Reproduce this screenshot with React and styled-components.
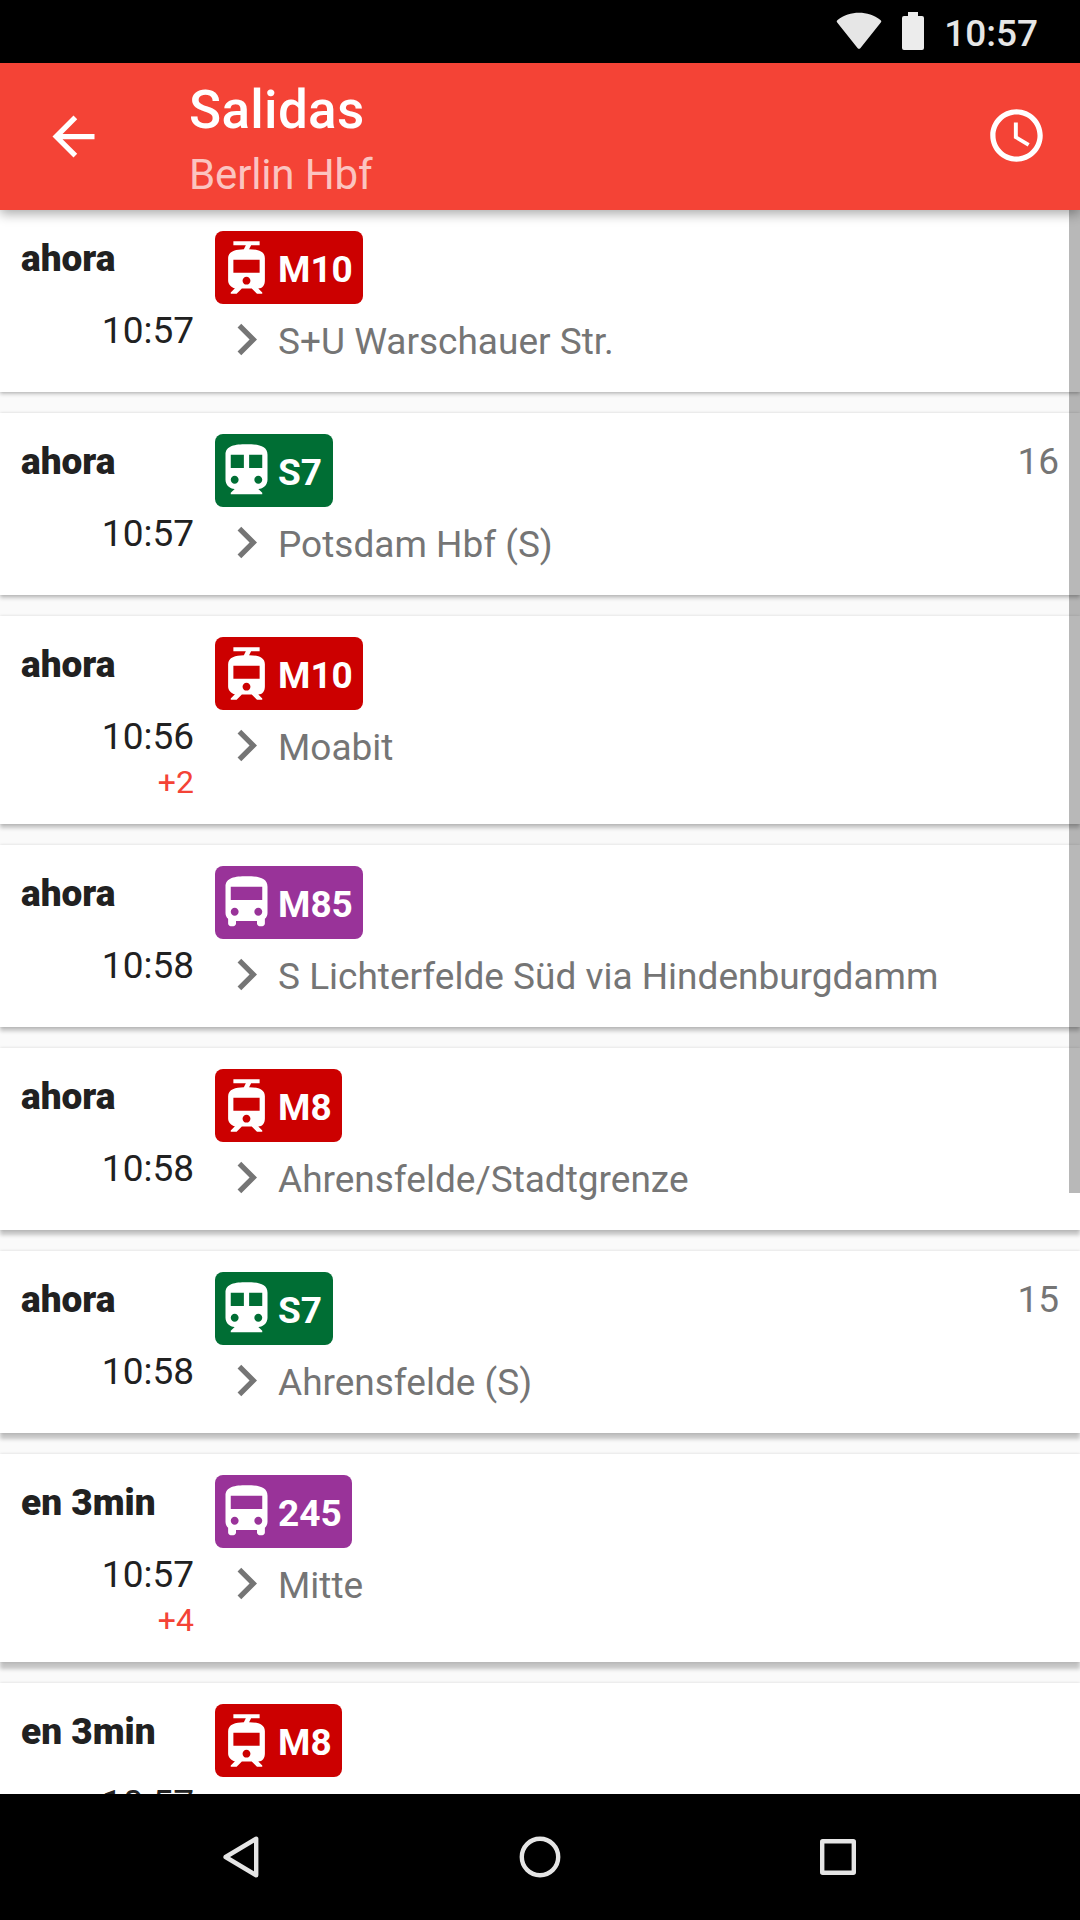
import React from "react";
import styled, { createGlobalStyle } from "styled-components";

const GlobalStyle = createGlobalStyle`
  * { box-sizing: border-box; }
  body { margin: 0; background: #fafafa; }
`;

const Screen = styled.div`
  display: flex;
  flex-direction: column;
  width: 1080px;
  height: 1920px;
  overflow: hidden;
  background: #fafafa;
  font-family: Roboto, "Liberation Sans", sans-serif;
  color: #212121;
`;

const StatusBar = styled.div`
  display: flex;
  flex: none;
  align-items: flex-start;
  justify-content: flex-end;
  height: 63px;
  padding: 12px 42px 0 0;
  background: #000;
  color: #e6e6e6;
`;

const WifiIcon = styled.svg`
  width: 46px;
  height: 38px;
  margin-right: 20px;
  fill: currentColor;
`;

const BatteryIcon = styled.svg`
  width: 22px;
  height: 38px;
  margin-right: 20px;
  fill: #ececec;
`;

const Clock = styled.span`
  font-size: 37px;
  font-weight: 500;
  line-height: 43px;
`;

const Toolbar = styled.header`
  position: relative;
  z-index: 2;
  display: flex;
  flex: none;
  align-items: center;
  height: 147px;
  padding: 0 32px 0 42px;
  background: #f44336;
  color: #fff;
  box-shadow: 0 4px 11px rgba(0, 0, 0, 0.33);
`;

const Icon = styled.svg`
  display: block;
  flex: none;
  width: 63px;
  height: 63px;
  fill: currentColor;
`;

const ClockIcon = styled(Icon)`
  margin-bottom: 2px;
`;

const Titles = styled.div`
  flex: 1;
  padding: 6px 0 0 84px;
`;

const Title = styled.h1`
  margin: 0;
  font-size: 53px;
  font-weight: 500;
  letter-spacing: 0.3px;
  line-height: 62px;
`;

const Subtitle = styled.div`
  margin-top: 9px;
  font-size: 42px;
  letter-spacing: -0.15px;
  line-height: 50px;
  color: rgba(255, 255, 255, 0.7);
`;

const Content = styled.main`
  position: relative;
  flex: 1;
  min-height: 0;
  overflow: hidden;
`;

const List = styled.div`
  display: flex;
  flex-direction: column;
  gap: 21px;
`;

const Card = styled.article`
  display: flex;
  flex: none;
  height: ${(p) => (p.$delayed ? 208 : 182)}px;
  padding: 21px;
  background: #fff;
  box-shadow: 0 ${(p) => p.$depth}px 4px rgba(0, 0, 0, 0.22), 0 0 3px rgba(0, 0, 0, 0.14);
`;

const Times = styled.div`
  display: flex;
  flex: none;
  flex-direction: column;
  width: 173px;
  padding-top: 6px;
`;

const Relative = styled.strong`
  font-size: 37px;
  font-weight: 900;
  line-height: 43px;
  white-space: nowrap;
`;

const Planned = styled.time`
  margin-top: 29px;
  font-size: 37px;
  line-height: 43px;
  text-align: right;
`;

const Delay = styled.span`
  margin-top: 6px;
  font-size: 32px;
  line-height: 37px;
  text-align: right;
  color: #f44336;
`;

const Trip = styled.div`
  flex: 1;
  padding-left: 21px;
`;

const LineBadge = styled.div`
  display: inline-flex;
  align-items: center;
  height: 73px;
  padding-right: 10.5px;
  border-radius: 8px;
  background: ${(p) => p.$color};
  color: #fff;
  font-size: 37px;
  font-weight: 700;
  line-height: 43px;
  vertical-align: top;
`;

const LineName = styled.span`
  padding-top: 3px;
`;

const Destination = styled.div`
  display: flex;
  align-items: center;
  height: 63px;
  margin-top: 4px;
  color: #757575;
  font-size: 37px;
  line-height: 43px;
  white-space: nowrap;
`;

const DestinationName = styled.span`
  padding-top: 4px;
`;

const Platform = styled.div`
  padding-top: 6px;
  font-size: 37px;
  line-height: 43px;
  color: #757575;
`;

const ScrollThumb = styled.div`
  position: absolute;
  top: 0;
  right: 0;
  width: 11px;
  height: 983px;
  background: rgba(0, 0, 0, 0.28);
`;

const NavBar = styled.nav`
  display: flex;
  flex: none;
  align-items: center;
  justify-content: space-between;
  height: 126px;
  padding: 0 211px;
  background: #000;
`;

const NavIcon = styled.svg`
  width: 60px;
  height: 60px;
  fill: none;
  stroke: #e5e5e5;
  stroke-width: 4.4;
  stroke-linejoin: round;
`;

const MODES = {
  tram: {
    color: "#cc0000",
    path: "M19 16.94V8.5c0-2.79-2.61-3.4-6.01-3.49l.76-1.51H17V2H7v1.5h4.75l-.76 1.52C7.86 5.11 5 5.73 5 8.5v8.44c0 1.45 1.19 2.66 2.59 2.97L6 21.5v.5h2.23l2-2H14l2 2h2v-.5L16.5 20h-.08c1.69 0 2.58-1.37 2.58-3.06zm-7 1.56c-.83 0-1.5-.67-1.5-1.5s.67-1.5 1.5-1.5 1.5.67 1.5 1.5-.67 1.5-1.5 1.5zm5-4.5H7V9h10v5z",
  },
  train: {
    color: "#006e34",
    path: "M12 2c-4.42 0-8 .5-8 4v9.5C4 17.43 5.57 19 7.5 19L6 20.5v.5h12v-.5L16.5 19c1.93 0 3.5-1.57 3.5-3.5V6c0-3.5-3.58-4-8-4zM7.5 17c-.83 0-1.5-.67-1.5-1.5S6.67 14 7.5 14s1.5.67 1.5 1.5S8.33 17 7.5 17zm3.5-6H6V6h5v5zm5.5 6c-.83 0-1.5-.67-1.5-1.5s.67-1.5 1.5-1.5 1.5.67 1.5 1.5-.67 1.5-1.5 1.5zm1.5-6h-5V6h5v5z",
  },
  bus: {
    color: "#993399",
    path: "M4 16c0 .88.39 1.67 1 2.22V20c0 .55.45 1 1 1h1c.55 0 1-.45 1-1v-1h8v1c0 .55.45 1 1 1h1c.55 0 1-.45 1-1v-1.78c.61-.55 1-1.34 1-2.22V6c0-3.5-3.58-4-8-4s-8 .5-8 4v10zm3.5 1c-.83 0-1.5-.67-1.5-1.5S6.67 14 7.5 14s1.5.67 1.5 1.5S8.33 17 7.5 17zm9 0c-.83 0-1.5-.67-1.5-1.5s.67-1.5 1.5-1.5 1.5.67 1.5 1.5-.67 1.5-1.5 1.5zm1.5-6H6V6h12v5z",
  },
};

const DEPARTURES = [
  { when: "ahora", time: "10:57", mode: "tram", line: "M10", to: "S+U Warschauer Str." },
  { when: "ahora", time: "10:57", mode: "train", line: "S7", to: "Potsdam Hbf (S)", platform: "16" },
  { when: "ahora", time: "10:56", delay: "+2", mode: "tram", line: "M10", to: "Moabit" },
  { when: "ahora", time: "10:58", mode: "bus", line: "M85", to: "S Lichterfelde Süd via Hindenburgdamm" },
  { when: "ahora", time: "10:58", mode: "tram", line: "M8", to: "Ahrensfelde/Stadtgrenze" },
  { when: "ahora", time: "10:58", mode: "train", line: "S7", to: "Ahrensfelde (S)", platform: "15" },
  { when: "en 3min", time: "10:57", delay: "+4", mode: "bus", line: "245", to: "Mitte" },
  { when: "en 3min", time: "10:57", mode: "tram", line: "M8" },
];

function Departure({ item, index }) {
  const mode = MODES[item.mode];
  return (
    <Card $delayed={Boolean(item.delay)} $depth={2 + index * 0.8}>
      <Times>
        <Relative>{item.when}</Relative>
        <Planned>{item.time}</Planned>
        {item.delay && <Delay>{item.delay}</Delay>}
      </Times>
      <Trip>
        <LineBadge $color={mode.color}>
          <Icon viewBox="0 0 24 24"><path d={mode.path} /></Icon>
          <LineName>{item.line}</LineName>
        </LineBadge>
        {item.to && (
          <Destination>
            <Icon viewBox="0 0 24 24"><path d="M10 6L8.59 7.41 13.17 12l-4.58 4.59L10 18l6-6z" /></Icon>
            <DestinationName>{item.to}</DestinationName>
          </Destination>
        )}
      </Trip>
      {item.platform && <Platform>{item.platform}</Platform>}
    </Card>
  );
}

export default function App() {
  return (
    <Screen>
      <GlobalStyle />
      <StatusBar>
        <WifiIcon viewBox="0 0 46 38">
          <path d="M1.2 10.6Q0 9 1.6 7.9C14-1.6 32-1.6 44.4 7.9Q46 9 44.8 10.6L24.5 35.9Q23 37.7 21.5 35.9Z" />
        </WifiIcon>
        <BatteryIcon viewBox="0 0 22 38">
          <path d="M6 0H16V4H20Q22 4 22 6V36Q22 38 20 38H2Q0 38 0 36V6Q0 4 2 4H6Z" />
        </BatteryIcon>
        <Clock>10:57</Clock>
      </StatusBar>
      <Toolbar>
        <Icon viewBox="0 0 24 24"><path d="M20 11H7.83l5.59-5.59L12 4l-8 8 8 8 1.41-1.41L7.83 13H20v-2z" /></Icon>
        <Titles>
          <Title>Salidas</Title>
          <Subtitle>Berlin Hbf</Subtitle>
        </Titles>
        <ClockIcon viewBox="0 0 24 24"><path d="M11.99 2C6.47 2 2 6.48 2 12s4.47 10 9.99 10C17.52 22 22 17.52 22 12S17.52 2 11.99 2zM12 20c-4.42 0-8-3.58-8-8s3.58-8 8-8 8 3.58 8 8-3.58 8-8 8zm.5-13H11v6l5.25 3.15.75-1.23-4.5-2.67z" /></ClockIcon>
      </Toolbar>
      <Content>
        <List>
          {DEPARTURES.map((item, index) => (
            <Departure key={index} item={item} index={index} />
          ))}
        </List>
        <ScrollThumb />
      </Content>
      <NavBar>
        <NavIcon viewBox="0 0 60 60"><path d="M14.6 30L45.2 11.7V48.3Z" /></NavIcon>
        <NavIcon viewBox="0 0 60 60"><circle cx="30" cy="30" r="18.2" /></NavIcon>
        <NavIcon viewBox="0 0 60 60"><rect x="13.2" y="14.2" width="31.6" height="31.6" rx="0.5" /></NavIcon>
      </NavBar>
    </Screen>
  );
}
